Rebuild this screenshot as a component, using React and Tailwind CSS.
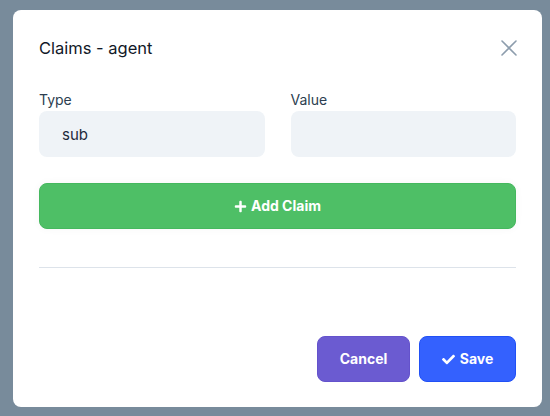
import React, { useState } from 'react';
import { FaPlus, FaCheck } from 'react-icons/fa';

const App = () => {
  const [type, setType] = useState('sub');
  const [value, setValue] = useState('');

  return (
    <div className="w-[550px] h-[416px] bg-[#788b9b] pt-[10px] pl-[13px] overflow-hidden" style={{ fontFamily: 'Inter, "Liberation Sans", sans-serif' }}>
      <div className="w-[529px] h-[397px] bg-white rounded-lg px-[26px] pt-[26px] pb-[25px] flex flex-col">
        {/* Header */}
        <div className="flex items-center justify-between h-6">
          <h2 className="text-[16.5px] text-[#111827] leading-6">Claims - agent</h2>
          <button type="button" className="text-[#8d9dad] -mr-[2px]">
            <svg width="18" height="18" viewBox="0 0 18 18" fill="none" stroke="currentColor" strokeWidth="1.6" strokeLinecap="round">
              <path d="M2 2 L16 16 M16 2 L2 16" />
            </svg>
          </button>
        </div>

        {/* Claim row */}
        <div className="grid grid-cols-2 gap-[26px] mt-[30px]">
          <div>
            <label className="block text-sm leading-5 text-[#2c3e50] mb-px">Type</label>
            <input
              value={type}
              onChange={(e) => setType(e.target.value)}
              className="w-full h-[46px] rounded-lg bg-[#eff3f7] px-[23px] text-[15px] text-[#1e2a3b] outline-none"
            />
          </div>
          <div>
            <label className="block text-sm leading-5 text-[#2c3e50] mb-px">Value</label>
            <input
              value={value}
              onChange={(e) => setValue(e.target.value)}
              className="w-full h-[46px] rounded-lg bg-[#eff3f7] px-[23px] text-[15px] text-[#1e2a3b] outline-none"
            />
          </div>
        </div>

        {/* Add Claim */}
        <button
          type="button"
          className="mt-[26px] h-[46px] w-full rounded-lg bg-[#4ebf66] border border-[#45b85e] text-white font-bold text-sm flex items-center justify-center gap-1 shadow-[0_0_8px_rgba(0,0,0,0.04)]"
        >
          <FaPlus className="w-[13px] h-[13px]" />
          Add Claim
        </button>

        <div className="mt-[38px] h-px bg-[#dde3ea]" />

        {/* Footer */}
        <div className="mt-auto flex justify-end gap-[9px]">
          <button
            type="button"
            className="h-[46px] w-[93px] rounded-lg bg-[#6b5bd1] border border-[#6452cc] text-white font-bold text-sm"
          >
            Cancel
          </button>
          <button
            type="button"
            className="h-[46px] w-[97px] rounded-lg bg-[#3461fe] border border-[#2150f5] text-white font-bold text-sm flex items-center justify-center gap-[5px]"
          >
            <FaCheck className="w-[13px] h-[13px]" />
            Save
          </button>
        </div>
      </div>
    </div>
  );
};

export default App;
